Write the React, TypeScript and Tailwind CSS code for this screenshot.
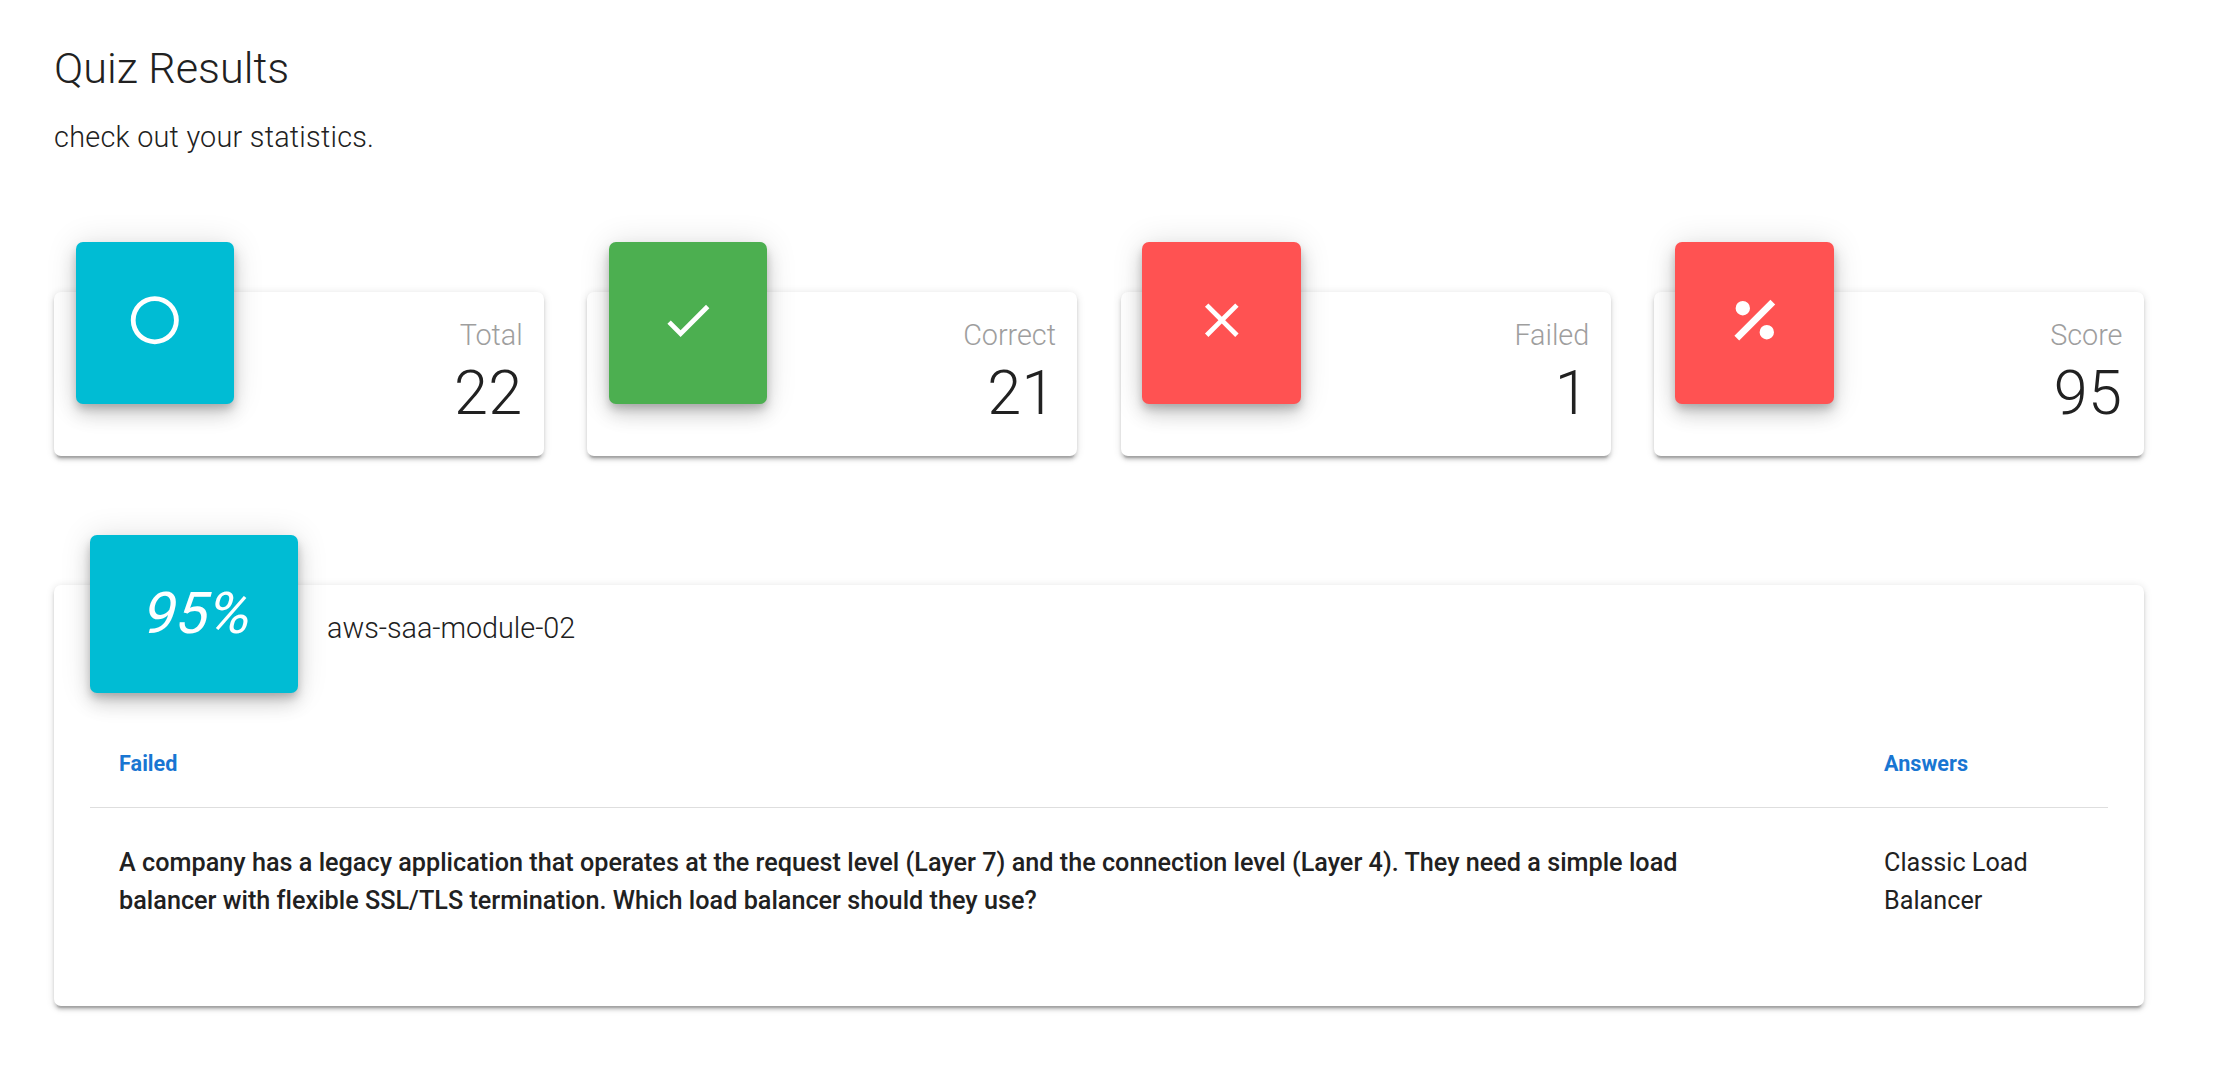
import type { ReactNode } from "react";

const CARD_SHADOW =
  "shadow-[0_5.4px_1.8px_-3.6px_rgba(0,0,0,0.2),0_3.6px_3.6px_0_rgba(0,0,0,0.14),0_1.8px_9px_0_rgba(0,0,0,0.12)]";
const TILE_SHADOW =
  "shadow-[0_5.4px_9px_-1.8px_rgba(0,0,0,0.2),0_10.8px_18px_0_rgba(0,0,0,0.14),0_1.8px_32.4px_0_rgba(0,0,0,0.12)]";

type Stat = { label: string; value: number; color: string; path: string };

const stats: Stat[] = [
  {
    label: "Total",
    value: 22,
    color: "bg-[#00bcd4]",
    path: "M12,20A8,8 0 0,1 4,12A8,8 0 0,1 12,4A8,8 0 0,1 20,12A8,8 0 0,1 12,20M12,2A10,10 0 0,0 2,12A10,10 0 0,0 12,22A10,10 0 0,0 22,12A10,10 0 0,0 12,2Z",
  },
  {
    label: "Correct",
    value: 21,
    color: "bg-[#4caf50]",
    path: "M21,7L9,19L3.5,13.5L4.91,12.09L9,16.17L19.59,5.59L21,7Z",
  },
  {
    label: "Failed",
    value: 1,
    color: "bg-[#ff5252]",
    path: "M19,6.41L17.59,5L12,10.59L6.41,5L5,6.41L10.59,12L5,17.59L6.41,19L12,13.41L17.59,19L19,17.59L13.41,12L19,6.41Z",
  },
  {
    label: "Score",
    value: 95,
    color: "bg-[#ff5252]",
    path: "M18.5,3.5L3.5,18.5L5.5,20.5L20.5,5.5M7,4A3,3 0 0,0 4,7A3,3 0 0,0 7,10A3,3 0 0,0 10,7A3,3 0 0,0 7,4M17,14A3,3 0 0,0 14,17A3,3 0 0,0 17,20A3,3 0 0,0 20,17A3,3 0 0,0 17,14Z",
  },
];

function Card({ className, children }: { className: string; children: ReactNode }) {
  return <div className={`rounded-[7px] bg-white ${CARD_SHADOW} ${className}`}>{children}</div>;
}

function StatCard({ label, value, color, path }: Stat) {
  return (
    <Card className="flex h-[164px] justify-between px-[21.45px]">
      <div
        className={`-mt-[50px] flex h-[162px] w-[158.6px] justify-center rounded-[7px] pt-[49px] ${color} ${TILE_SHADOW}`}
      >
        <svg viewBox="0 0 24 24" className="h-[58.4px] w-[57.6px] fill-white">
          <path d={path} />
        </svg>
      </div>
      <div className="pt-[22px] text-right font-light">
        <div className="text-[28.8px] leading-[43px] tracking-[-0.04px] text-[#9e9e9e]">{label}</div>
        <div className="text-[61.2px] leading-[72px] tracking-[0.45px]">{value}</div>
      </div>
    </Card>
  );
}

export default function App() {
  return (
    <main className="min-h-[1090px] w-full bg-white pr-[72.15px] pl-[54.1px] font-['Roboto',sans-serif] text-[#212121]">
      <h1 className="pt-[40px] text-[43.2px] leading-[58px] font-light">Quiz Results</h1>
      <p className="mt-[18px] text-[28.8px] leading-[43px] font-light tracking-[0.25px]">check out your statistics.</p>

      <section className="mt-[133px] grid grid-cols-4 gap-[43.25px]">
        {stats.map((s) => (
          <StatCard key={s.label} {...s} />
        ))}
      </section>

      <Card className="mt-[129px] h-[421px] px-[36px]">
        <div className="flex items-start">
          <div
            className={`-mt-[50px] flex h-[158px] w-[208px] items-center justify-center rounded-[7px] pl-[8.4px] text-[57.6px] text-white ${TILE_SHADOW} bg-[#00bcd4]`}
          >
            <span className="inline-block -skew-x-[14deg]">95%</span>
          </div>
          <h2 className="ml-[29px] pt-[22px] text-[28.8px] leading-[43px] font-light tracking-[-0.04px]">
            aws-saa-module-02
          </h2>
        </div>
        <table className="mt-[27px] w-full table-fixed border-separate border-spacing-0 text-left">
          <thead>
            <tr className="text-[21.6px] text-[#1976d2]">
              <th className="h-[88px] w-[1765px] border-b border-[#dedede] px-[29px] pt-[2px] font-bold">Failed</th>
              <th className="h-[88px] border-b border-[#dedede] px-[29px] pt-[2px] font-bold">Answers</th>
            </tr>
          </thead>
          <tbody>
            <tr className="align-top text-[25.2px] leading-[38px]">
              <td className="pt-[36px] pr-[150px] pl-[29px] font-medium tracking-[0.014px]">
                A company has a legacy application that operates at the request level (Layer 7) and the connection level
                (Layer 4). They need a simple load balancer with flexible SSL/TLS termination. Which load balancer should
                they use?
              </td>
              <td className="px-[29px] pt-[36px]">Classic Load Balancer</td>
            </tr>
          </tbody>
        </table>
      </Card>
    </main>
  );
}
